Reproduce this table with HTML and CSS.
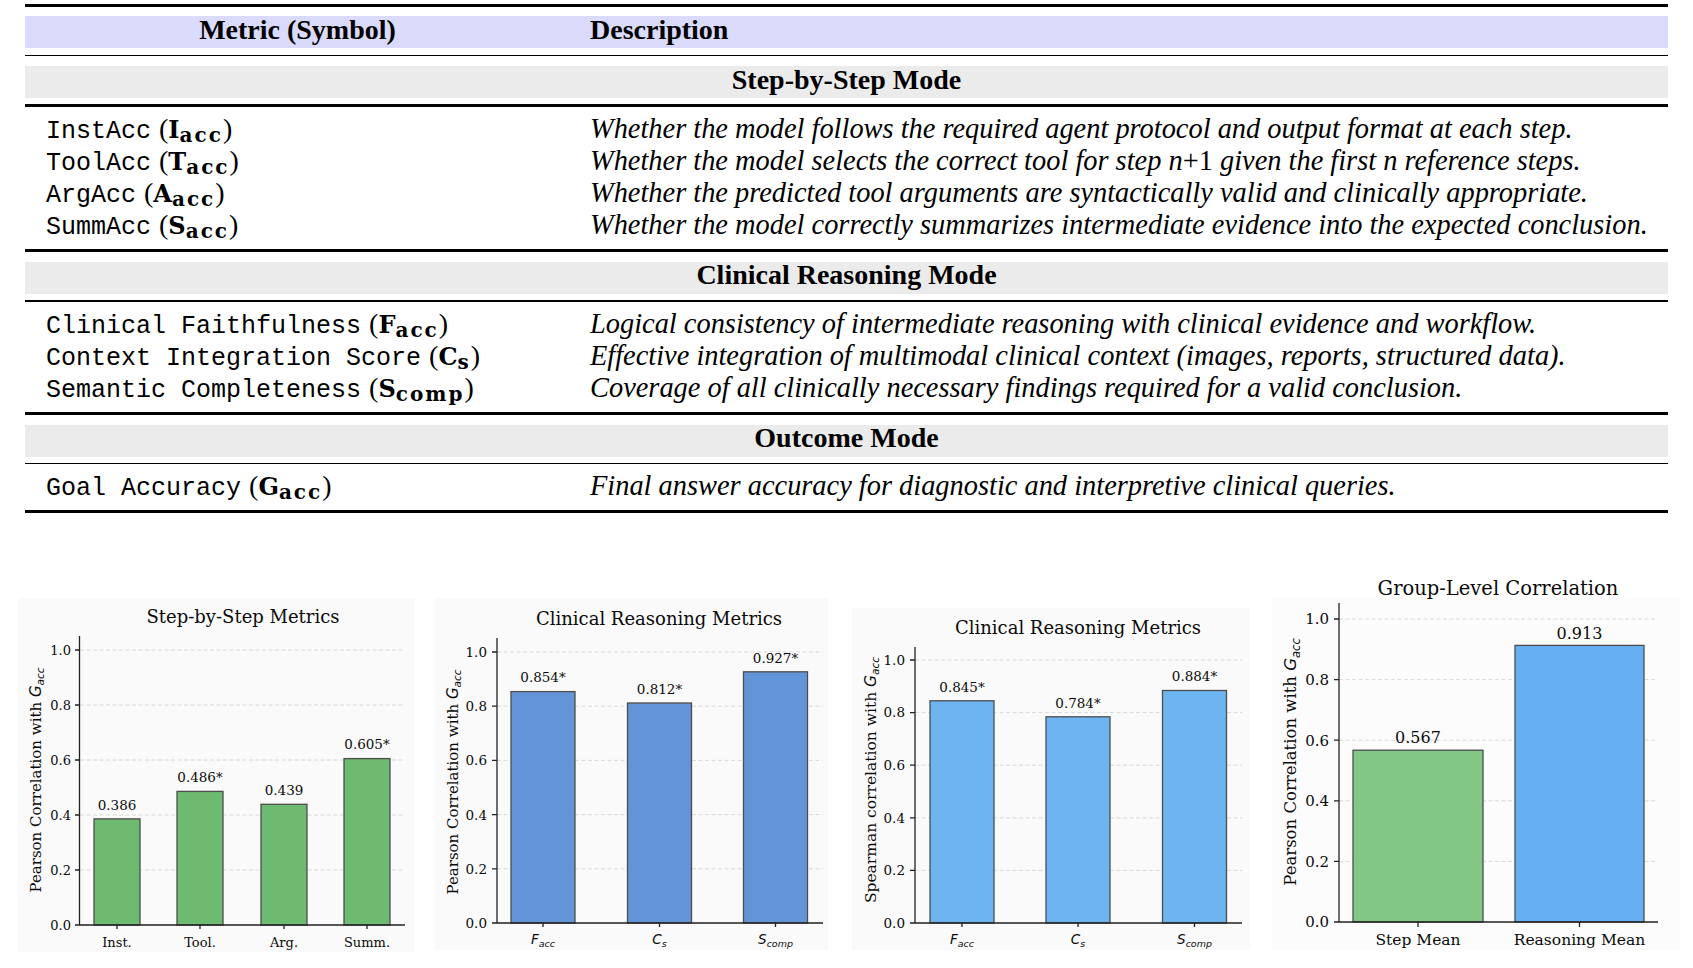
FILE: index.html
```html
<!DOCTYPE html>
<html lang="en">
<head>
<meta charset="utf-8">
<title>Metrics</title>
<link rel="stylesheet" href="styles.css">
</head>
<body>
<main class="page">
  <section class="metrics">
    <div class="rule rule-top"></div>
    <div class="head">
      <div class="c1 head-metric">Metric (Symbol)</div>
      <div class="c2">Description</div>
    </div>
    <div class="rule rule-thin"></div>
    <div class="band">Step-by-Step Mode</div>
    <div class="rule rule-mid"></div>
    <div class="rows">
      <div class="row"><div class="c1"><span class="tt">InstAcc</span> <span class="sym">(<b>I<sub>acc</sub></b>)</span></div><div class="c2 desc">Whether the model follows the required agent protocol and output format at each step.</div></div>
      <div class="row"><div class="c1"><span class="tt">ToolAcc</span> <span class="sym">(<b>T<sub>acc</sub></b>)</span></div><div class="c2 desc">Whether the model selects the correct tool for step <span class="mv">n</span><span class="up">+1</span> given the first <span class="mv">n</span> reference steps.</div></div>
      <div class="row"><div class="c1"><span class="tt">ArgAcc</span> <span class="sym">(<b>A<sub>acc</sub></b>)</span></div><div class="c2 desc">Whether the predicted tool arguments are syntactically valid and clinically appropriate.</div></div>
      <div class="row"><div class="c1"><span class="tt">SummAcc</span> <span class="sym">(<b>S<sub>acc</sub></b>)</span></div><div class="c2 desc">Whether the model correctly summarizes intermediate evidence into the expected conclusion.</div></div>
    </div>
    <div class="rule rule-mid rule-flush"></div>
    <div class="band band-low">Clinical Reasoning Mode</div>
    <div class="rule rule-thin rule-low"></div>
    <div class="rows">
      <div class="row"><div class="c1"><span class="tt">Clinical Faithfulness</span> <span class="sym">(<b>F<sub>acc</sub></b>)</span></div><div class="c2 desc">Logical consistency of intermediate reasoning with clinical evidence and workflow.</div></div>
      <div class="row"><div class="c1"><span class="tt">Context Integration Score</span> <span class="sym">(<b>C<sub>s</sub></b>)</span></div><div class="c2 desc">Effective integration of multimodal clinical context (images, reports, structured data).</div></div>
      <div class="row"><div class="c1"><span class="tt">Semantic Completeness</span> <span class="sym">(<b>S<sub>comp</sub></b>)</span></div><div class="c2 desc">Coverage of all clinically necessary findings required for a valid conclusion.</div></div>
    </div>
    <div class="rule rule-mid rule-flush"></div>
    <div class="band band-low">Outcome Mode</div>
    <div class="rule rule-thin rule-low"></div>
    <div class="rows">
      <div class="row"><div class="c1"><span class="tt">Goal Accuracy</span> <span class="sym">(<b>G<sub>acc</sub></b>)</span></div><div class="c2 desc">Final answer accuracy for diagnostic and interpretive clinical queries.</div></div>
    </div>
    <div class="rule rule-mid rule-flush"></div>
  </section>

  <section class="charts">
    <!-- Chart 1: Step-by-Step Metrics -->
    <svg class="chart" viewBox="0 0 420 408" width="420" height="408">
      <rect class="bg" x="18" y="38" width="397" height="354"/>
      <text class="title" x="243" y="63">Step-by-Step Metrics</text>
      <g class="grid">
        <line x1="80" y1="90" x2="405" y2="90"/>
        <line x1="80" y1="145" x2="405" y2="145"/>
        <line x1="80" y1="200" x2="405" y2="200"/>
        <line x1="80" y1="255" x2="405" y2="255"/>
        <line x1="80" y1="310" x2="405" y2="310"/>
      </g>
      <g class="bars c-green">
        <rect x="94" y="258.9" width="46" height="106.1"/>
        <rect x="177" y="231.4" width="46" height="133.6"/>
        <rect x="261" y="244.3" width="46" height="120.7"/>
        <rect x="344" y="198.6" width="46" height="166.4"/>
      </g>
      <g class="axis">
        <path d="M79.5 76V365.5M75 365H405"/>
        <path d="M75 90H79M75 145H79M75 200H79M75 255H79M75 310H79"/>
        <path d="M117 365V369M200 365V369M284 365V369M367 365V369"/>
      </g>
      <g class="ticklbl f13">
        <text x="71" y="369.7">0.0</text>
        <text x="71" y="314.7">0.2</text>
        <text x="71" y="259.7">0.4</text>
        <text x="71" y="204.7">0.6</text>
        <text x="71" y="149.7">0.8</text>
        <text x="71" y="94.7">1.0</text>
      </g>
      <g class="mid f135">
        <text x="117" y="249.5">0.386</text>
        <text x="200" y="222">0.486*</text>
        <text x="284" y="235">0.439</text>
        <text x="367" y="189.3">0.605*</text>
      </g>
      <g class="mid f13">
        <text x="117" y="386.5">Inst.</text>
        <text x="200" y="386.5">Tool.</text>
        <text x="284" y="386.5">Arg.</text>
        <text x="367" y="386.5">Summ.</text>
      </g>
      <text class="ylbl f15" transform="translate(41 220) rotate(-90)">Pearson Correlation with <tspan class="mi">G</tspan><tspan class="mi sub10" dy="3">acc</tspan></text>
    </svg>

    <!-- Chart 2: Clinical Reasoning Metrics (Pearson) -->
    <svg class="chart" viewBox="0 0 425 408" width="425" height="408">
      <rect class="bg" x="15" y="38" width="393" height="352"/>
      <text class="title" x="239" y="65">Clinical Reasoning Metrics</text>
      <g class="grid">
        <line x1="77" y1="92" x2="403" y2="92"/>
        <line x1="77" y1="146.2" x2="403" y2="146.2"/>
        <line x1="77" y1="200.4" x2="403" y2="200.4"/>
        <line x1="77" y1="254.6" x2="403" y2="254.6"/>
        <line x1="77" y1="308.8" x2="403" y2="308.8"/>
      </g>
      <g class="bars c-blue">
        <rect x="91" y="131.6" width="64" height="231.4"/>
        <rect x="207.5" y="143" width="64" height="220"/>
        <rect x="323.5" y="111.8" width="64" height="251.2"/>
      </g>
      <g class="axis">
        <path d="M77 78V363.5M72 363H403"/>
        <path d="M72 92H77M72 146.2H77M72 200.4H77M72 254.6H77M72 308.8H77"/>
        <path d="M123 363V367M239.5 363V367M355.5 363V367"/>
      </g>
      <g class="ticklbl f135">
        <text x="67" y="367.9">0.0</text>
        <text x="67" y="313.7">0.2</text>
        <text x="67" y="259.5">0.4</text>
        <text x="67" y="205.3">0.6</text>
        <text x="67" y="151.1">0.8</text>
        <text x="67" y="96.9">1.0</text>
      </g>
      <g class="mid f135">
        <text x="123" y="122.3">0.854*</text>
        <text x="239.5" y="133.7">0.812*</text>
        <text x="355.5" y="102.5">0.927*</text>
      </g>
      <g class="mid xmath">
        <text x="123" y="384"><tspan class="mi">F</tspan><tspan class="mi sub9" dy="3">acc</tspan></text>
        <text x="239.5" y="384"><tspan class="mi">C</tspan><tspan class="mi sub9" dy="3">s</tspan></text>
        <text x="355.5" y="384"><tspan class="mi">S</tspan><tspan class="mi sub9" dy="3">comp</tspan></text>
      </g>
      <text class="ylbl f15" transform="translate(38 222) rotate(-90)">Pearson Correlation with <tspan class="mi">G</tspan><tspan class="mi sub10" dy="3">acc</tspan></text>
    </svg>

    <!-- Chart 3: Clinical Reasoning Metrics (Spearman) -->
    <svg class="chart" viewBox="0 0 420 408" width="420" height="408">
      <rect class="bg" x="7" y="48" width="398" height="342"/>
      <text class="title" x="233" y="73.5">Clinical Reasoning Metrics</text>
      <g class="grid">
        <line x1="70" y1="100" x2="397" y2="100"/>
        <line x1="70" y1="152.6" x2="397" y2="152.6"/>
        <line x1="70" y1="205.2" x2="397" y2="205.2"/>
        <line x1="70" y1="257.8" x2="397" y2="257.8"/>
        <line x1="70" y1="310.4" x2="397" y2="310.4"/>
      </g>
      <g class="bars c-sky">
        <rect x="85" y="140.8" width="64" height="222.2"/>
        <rect x="201" y="156.8" width="64" height="206.2"/>
        <rect x="317.5" y="130.5" width="64" height="232.5"/>
      </g>
      <g class="axis">
        <path d="M70 87V363.5M65 363H397"/>
        <path d="M65 100H70M65 152.6H70M65 205.2H70M65 257.8H70M65 310.4H70"/>
        <path d="M117 363V367M233 363V367M349.5 363V367"/>
      </g>
      <g class="ticklbl f135">
        <text x="60" y="367.8">0.0</text>
        <text x="60" y="315.2">0.2</text>
        <text x="60" y="262.6">0.4</text>
        <text x="60" y="210">0.6</text>
        <text x="60" y="157.4">0.8</text>
        <text x="60" y="104.8">1.0</text>
      </g>
      <g class="mid f135">
        <text x="117" y="131.5">0.845*</text>
        <text x="233" y="147.5">0.784*</text>
        <text x="349.5" y="121.2">0.884*</text>
      </g>
      <g class="mid xmath">
        <text x="117" y="384"><tspan class="mi">F</tspan><tspan class="mi sub9" dy="3">acc</tspan></text>
        <text x="233" y="384"><tspan class="mi">C</tspan><tspan class="mi sub9" dy="3">s</tspan></text>
        <text x="349.5" y="384"><tspan class="mi">S</tspan><tspan class="mi sub9" dy="3">comp</tspan></text>
      </g>
      <text class="ylbl f155" transform="translate(31 220) rotate(-90)">Spearman correlation with <tspan class="mi">G</tspan><tspan class="mi sub10" dy="3">acc</tspan></text>
    </svg>

    <!-- Chart 4: Group-Level Correlation -->
    <svg class="chart" viewBox="0 0 428 408" width="428" height="408">
      <rect class="bg bg-light" x="7" y="38" width="408" height="352"/>
      <text class="title title-lg" x="233" y="35">Group-Level Correlation</text>
      <g class="grid">
        <line x1="74" y1="59" x2="393" y2="59"/>
        <line x1="74" y1="119.6" x2="393" y2="119.6"/>
        <line x1="74" y1="180.2" x2="393" y2="180.2"/>
        <line x1="74" y1="240.8" x2="393" y2="240.8"/>
        <line x1="74" y1="301.4" x2="393" y2="301.4"/>
      </g>
      <g class="bars">
        <rect class="c-mint" x="88" y="190.2" width="130" height="171.8"/>
        <rect class="c-azure" x="250" y="85.4" width="129" height="276.6"/>
      </g>
      <g class="axis">
        <path d="M74 43V362.5M69 362H393"/>
        <path d="M69 59H74M69 119.6H74M69 180.2H74M69 240.8H74M69 301.4H74"/>
        <path d="M153 362V367M314.5 362V367"/>
      </g>
      <g class="ticklbl f15">
        <text x="64" y="367.4">0.0</text>
        <text x="64" y="306.8">0.2</text>
        <text x="64" y="246.2">0.4</text>
        <text x="64" y="185.6">0.6</text>
        <text x="64" y="125">0.8</text>
        <text x="64" y="64.4">1.0</text>
      </g>
      <g class="mid f16">
        <text x="153" y="183">0.567</text>
        <text x="314.5" y="78.5">0.913</text>
      </g>
      <g class="mid f155">
        <text x="153" y="385">Step Mean</text>
        <text x="314.5" y="385">Reasoning Mean</text>
      </g>
      <text class="ylbl f165" transform="translate(31 202) rotate(-90)">Pearson Correlation with <tspan class="mi">G</tspan><tspan class="mi sub11" dy="3.5">acc</tspan></text>
    </svg>
  </section>
</main>
</body>
</html>
```

FILE: styles.css
```css
* { box-sizing: border-box; }
html, body { margin: 0; padding: 0; background: #ffffff; }

.page {
  width: 1693px;
  padding-top: 4px;
  font-family: "Liberation Serif", "Times New Roman", serif;
  color: #000;
}

/* ---------- table ---------- */
.metrics { margin: 0 25px; }

.rule { background: #000; }
.rule-top { height: 3px; }
.rule-thin { height: 1.5px; margin-top: 6.5px; }
.rule-low { margin-top: 6px; }
.rule-mid { height: 3px; margin-top: 6px; }
.rule-flush { margin-top: 0; }

.head {
  margin-top: 9px;
  height: 32px;
  background: #dadafb;
  display: grid;
  grid-template-columns: 545px 1fr;
  font-weight: bold;
  font-size: 28px;
  line-height: 27px;
}
.head-metric { text-align: center; }
.head .c2 { padding-left: 20px; }

.band {
  margin-top: 10px;
  height: 32px;
  background: #ebebeb;
  text-align: center;
  font-weight: bold;
  font-size: 28px;
  line-height: 28px;
}
.band-low { line-height: 26px; }

.rows { padding: 6px 0 8px; }

.row {
  display: grid;
  grid-template-columns: 545px 1fr;
  height: 32px;
  line-height: 32px;
  white-space: pre;
}
.row .c1 { padding-left: 21px; }
.desc {
  padding-left: 20px;
  font-style: italic;
  font-size: 28.4px;
}
.mv { font-style: italic; }
.up { font-style: normal; }

.tt {
  font-family: "Liberation Mono", "Courier New", monospace;
  font-size: 25px;
}
.sym { font-size: 28px; margin-left: 4px; }
.sym b {
  font-family: "DejaVu Serif", serif;
  font-weight: bold;
  font-size: 24px;
}
.sym sub {
  font-size: 20px;
  letter-spacing: 2px;
  vertical-align: -4px;
  line-height: 0;
}

/* ---------- charts ---------- */
.charts {
  display: flex;
  margin-top: 47px;
}
.chart { display: block; flex: none; }

.bg { fill: #fafafa; }
.bg-light { fill: #fcfcfc; }

.chart text {
  font-family: "DejaVu Serif", serif;
  fill: #0a0a0a;
}
.title { font-size: 18px; text-anchor: middle; }
.title-lg { font-size: 19.5px; }

.grid line {
  stroke: #d0d0d0;
  stroke-width: 0.8;
  stroke-dasharray: 4 2.5;
}
.axis path {
  stroke: #222;
  stroke-width: 1.3;
  fill: none;
}
.bars rect { stroke: #4d4d4d; stroke-width: 1.3; }
.c-green rect { fill: #6dbb70; }
.c-blue rect { fill: #6494d8; }
.c-sky rect { fill: #6cb5f1; }
.c-mint { fill: #82c785; }
.c-azure { fill: #64b0f2; }

.ticklbl text { text-anchor: end; }
.mid text { text-anchor: middle; }
.ylbl { text-anchor: middle; }

.f13 text, .f13 { font-size: 13px; }
.f135 text { font-size: 13.5px; }
.f15 text, .f15 { font-size: 15px; }
.f155 text, .f155 { font-size: 15.5px; }
.f16 text { font-size: 16px; }
.f165 { font-size: 16.5px; }

.chart .mi {
  font-family: "DejaVu Sans", sans-serif;
  font-style: oblique;
}
.xmath text { font-size: 13.5px; }
.chart .sub9 { font-size: 9.5px; }
.chart .sub10 { font-size: 10.5px; }
.chart .sub11 { font-size: 11.5px; }
```
